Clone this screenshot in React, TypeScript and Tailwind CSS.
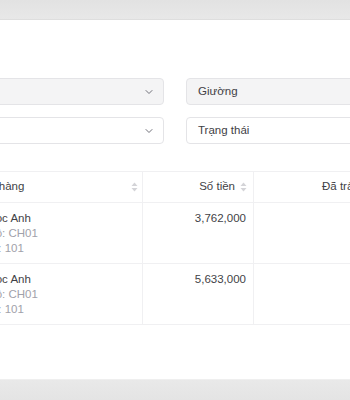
import { ChevronDown } from "lucide-react";

const font = { fontFamily: '"Liberation Sans", Arial, sans-serif' };

function SortIcon() {
  return (
    <svg width="7" height="10" viewBox="0 0 7 10" className="shrink-0">
      <path d="M3.5 0.5 L6.5 4 L0.5 4 Z" fill="#d4d4d8" />
      <path d="M3.5 9.5 L6.5 6 L0.5 6 Z" fill="#d4d4d8" />
    </svg>
  );
}

function Select({ label, filled }: { label?: string; filled?: boolean }) {
  return (
    <div
      className={`w-[314px] h-[27px] shrink-0 rounded-[4px] border border-[#e4e4e7] flex items-center justify-between pl-[11px] pr-[8px] text-[11.5px] text-[#3f3f46] ${
        filled ? "bg-[#f4f4f5]" : "bg-white"
      }`}
    >
      <span>{label}</span>
      <ChevronDown size={12} strokeWidth={2} className="text-[#71717a]" />
    </div>
  );
}

const rows = [
  { name: "Lê Ngọc Anh", room: "Căn hộ: CH01", bed: "Phòng: 101", amount: "3,762,000" },
  { name: "Lê Ngọc Anh", room: "Căn hộ: CH01", bed: "Phòng: 101", amount: "5,633,000" },
];

export default function App() {
  return (
    <div className="w-[350px] h-[400px] overflow-hidden bg-[#e7e7e7] flex flex-col" style={font}>
      <div className="h-[20px] shrink-0 bg-gradient-to-b from-[#e2e2e2] to-[#e8e8e8] border-b border-[#dedede]" />

      <div className="h-[359px] shrink-0 bg-white overflow-hidden">
        {/* Filters */}
        <div className="pt-[58px] flex flex-col gap-[12px] -ml-[150px]">
          <div className="flex gap-[22px]">
            <Select filled />
            <Select label="Giường" filled />
          </div>
          <div className="flex gap-[22px]">
            <Select />
            <Select label="Trạng thái" />
          </div>
        </div>

        {/* Table */}
        <div className="mt-[27px] -ml-[60px] w-[480px] text-[11.5px] text-[#3f3f46]">
          <div className="flex h-[32px] border-y border-[#f0f0f2]">
            <div className="w-[203px] pl-[23px] pr-[4px] flex items-center justify-between border-r border-[#f0f0f2]">
              <span>Khách hàng</span>
              <SortIcon />
            </div>
            <div className="w-[111px] pr-[6px] flex items-center justify-end gap-[5px] border-r border-[#f0f0f2]">
              <span>Số tiền</span>
              <SortIcon />
            </div>
            <div className="w-[166px] pl-[68px] flex items-center">
              <span>Đã trả</span>
            </div>
          </div>
          {rows.map((r, i) => (
            <div key={i} className="flex h-[61px] border-b border-[#f0f0f2]">
              <div className="w-[203px] pl-[25px] pt-[8px] leading-[15px] border-r border-[#f0f0f2]">
                <div>{r.name}</div>
                <div className="text-[#a1a1aa]">{r.room}</div>
                <div className="text-[#a1a1aa]">{r.bed}</div>
              </div>
              <div className="w-[111px] pr-[7px] pt-[8px] leading-[15px] text-right border-r border-[#f0f0f2]">
                {r.amount}
              </div>
              <div className="w-[166px]" />
            </div>
          ))}
        </div>
      </div>

      <div className="flex-1 border-t border-[#efefef] bg-gradient-to-b from-[#e9e9e9] to-[#e4e4e4]" />
    </div>
  );
}
